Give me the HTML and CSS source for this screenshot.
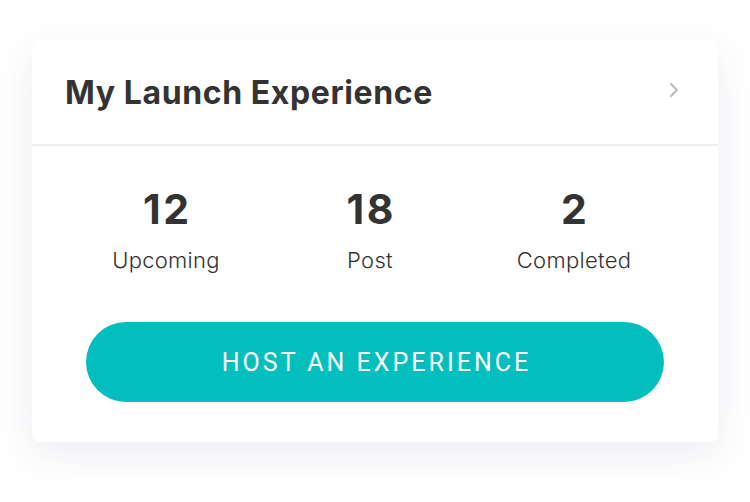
FILE: index.html
```html
<!DOCTYPE html>
<html>
<head>
<meta charset="utf-8">
<link rel="stylesheet" href="styles.css">
</head>
<body>
<div class="card">
  <div class="card-header">
    <h1 class="title">My Launch Experience</h1>
    <svg class="chevron" width="12" height="16" viewBox="0 0 12 16"><polyline points="3,2 9,8 3,14" fill="none" stroke="#bdbdbd" stroke-width="2.2" stroke-linecap="round" stroke-linejoin="round"/></svg>
  </div>
  <div class="card-body">
    <div class="stats">
      <div class="stat"><div class="num">12</div><div class="label">Upcoming</div></div>
      <div class="stat"><div class="num">18</div><div class="label">Post</div></div>
      <div class="stat"><div class="num">2</div><div class="label">Completed</div></div>
    </div>
    <button class="host-btn">HOST AN EXPERIENCE</button>
  </div>
</div>
</body>
</html>
```
FILE: styles.css
```css
html, body { margin: 0; padding: 0; background: #ffffff; }
body { padding: 40px 32px; font-family: Inter, "Noto Sans", sans-serif; color: #333333; }
.card {
  width: 686px;
  height: 402px;
  box-sizing: border-box;
  background: #ffffff;
  border-radius: 8px;
  box-shadow: 0 12px 40px rgba(40, 50, 110, 0.09);
  display: flex;
  flex-direction: column;
}
.card-header {
  height: 104px;
  border-bottom: 2px solid #eeeeee;
  display: flex;
  align-items: center;
  justify-content: space-between;
  padding: 0 38px 0 33px;
}
.title {
  margin: 0;
  font-size: 32px;
  font-weight: 700;
  color: #333333;
  letter-spacing: 0.6px;
}
.chevron { display: block; margin-top: -4px; }
.card-body {
  flex: 1;
  padding: 39px 54px 40px;
  display: flex;
  flex-direction: column;
}
.stats {
  display: grid;
  grid-template-columns: repeat(3, 1fr);
  margin: 0 -12px 0 -22px;
}
.stat { display: flex; flex-direction: column; align-items: center; }
.num {
  font-size: 41px;
  line-height: 49px;
  font-weight: 700;
  color: #333333;
  letter-spacing: 2.5px;
  text-indent: 2.5px;
}
.label {
  margin-top: 13px;
  font-size: 22px;
  line-height: 26px;
  font-weight: 300;
  color: #333333;
  letter-spacing: 0.3px;
}
.host-btn {
  margin-top: auto;
  height: 80px;
  border: none;
  border-radius: 40px;
  background: #02bfbd;
  color: #ffffff;
  font-family: Roboto, "Liberation Sans", sans-serif;
  font-size: 25px;
  font-weight: 400;
  letter-spacing: 3px;
  text-indent: 3px;
  padding: 0;
}
```
